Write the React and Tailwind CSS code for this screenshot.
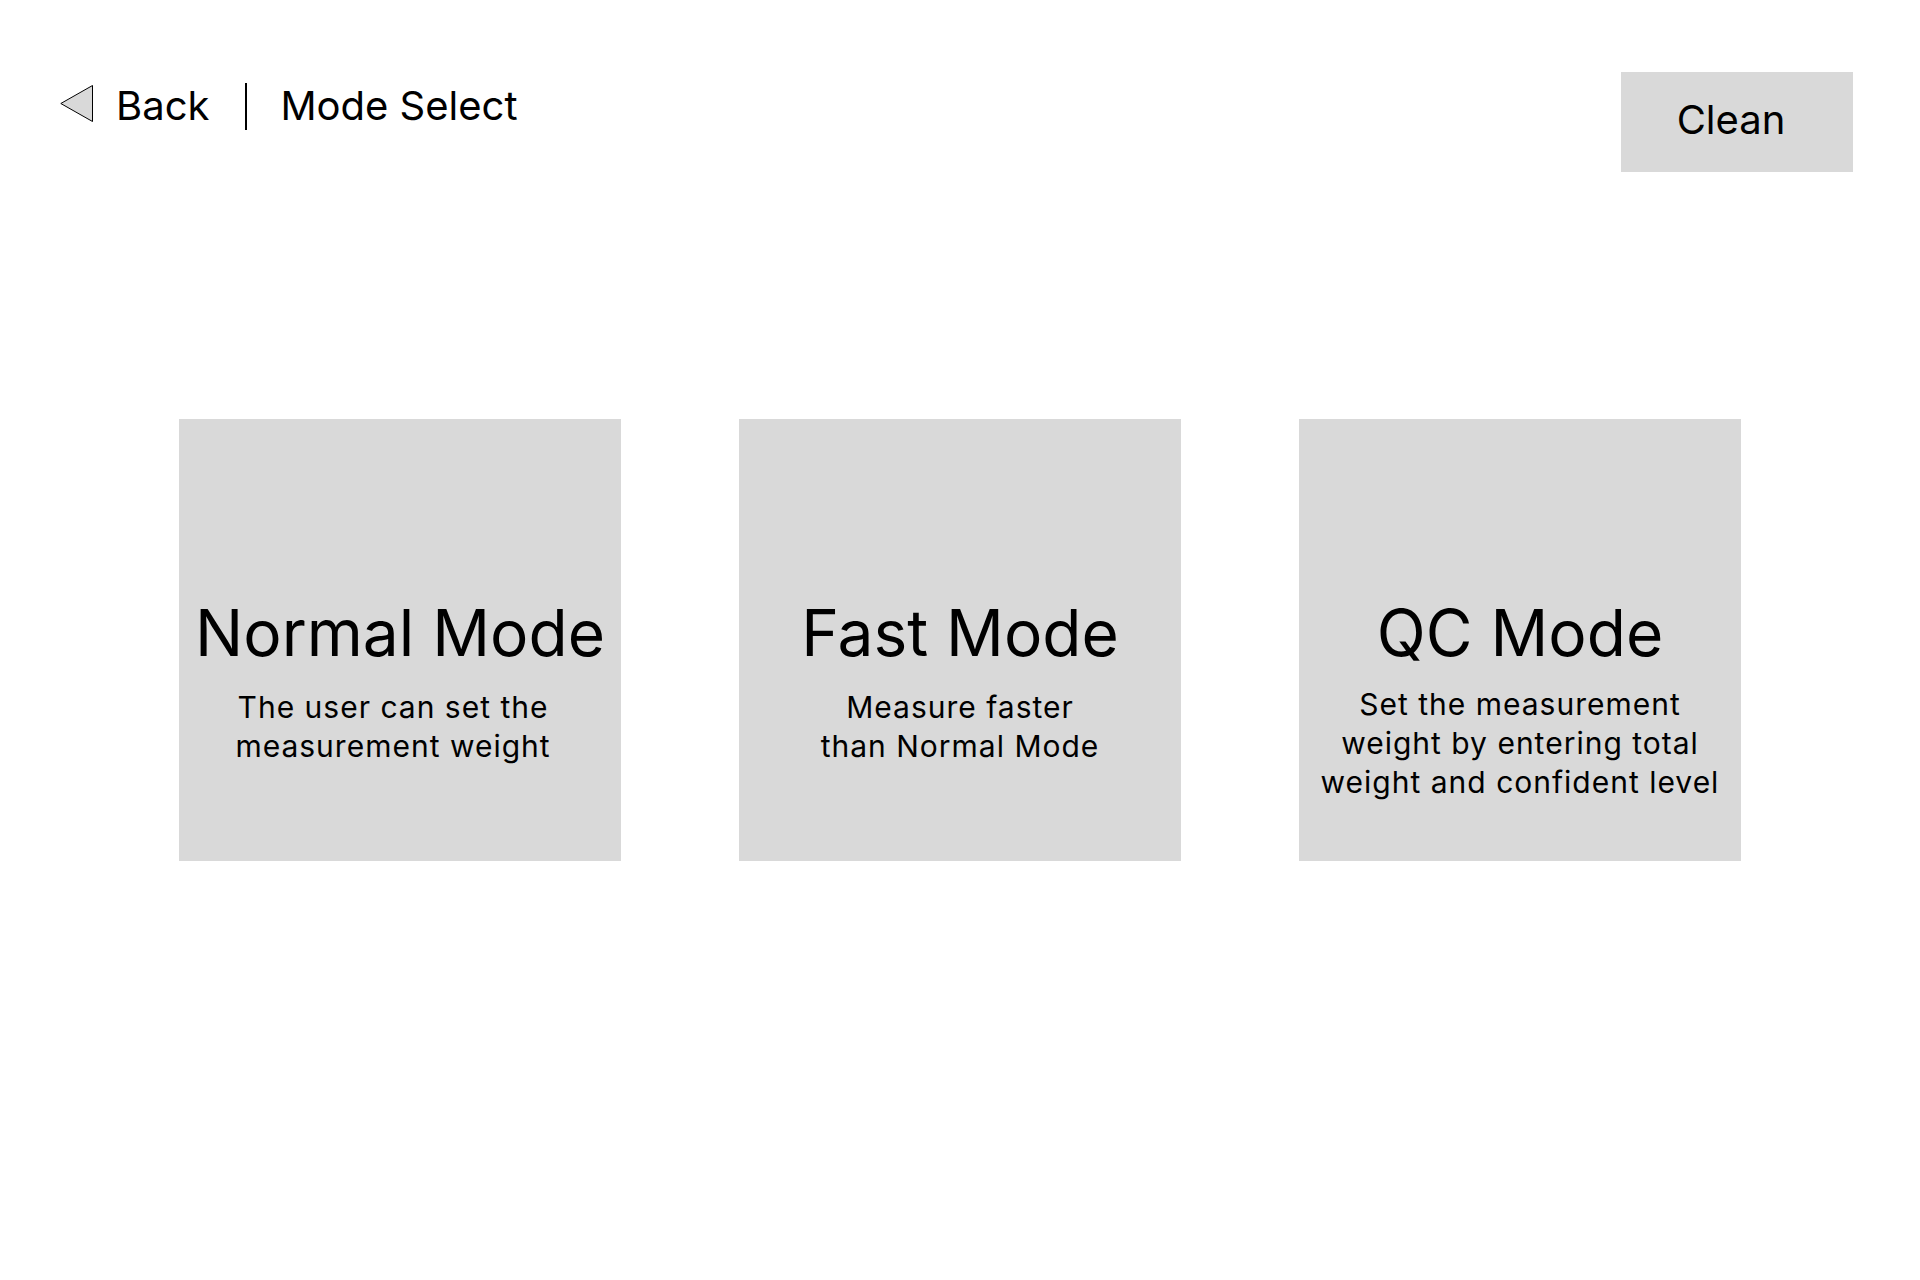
import React from 'react';

const modes = [
  {
    title: 'Normal Mode',
    lines: ['The user can set the', 'measurement weight'],
    descClass: 'mt-[17px] pr-[14px]'
  },
  {
    title: 'Fast Mode',
    lines: ['Measure faster', 'than Normal Mode'],
    descClass: 'mt-[17px]'
  },
  {
    title: 'QC Mode',
    lines: ['Set the measurement', 'weight by entering total', 'weight and confident level'],
    descClass: 'mt-[14px]'
  }
];

function BackArrow() {
  return (
    <svg width="34" height="39" viewBox="0 0 34 39" className="mt-[3px] shrink-0">
      <polygon points="32.5,0.5 0.8,18.5 32.5,36.5" fill="#d9d9d9" stroke="#000" strokeWidth="1" />
    </svg>
  );
}

function ModeCard({ mode }) {
  return (
    <div className="flex flex-col items-center w-[442px] h-[442px] bg-[#d9d9d9] pt-[175px] text-black">
      <h2 className="text-[64px] leading-[77px] font-normal">{mode.title}</h2>
      <p className={`text-[30px] leading-[39px] tracking-[1px] text-center ${mode.descClass}`}>
        {mode.lines.map((line, index) => (
          <span key={index} className="block">
            {line}
          </span>
        ))}
      </p>
    </div>
  );
}

export default function App() {
  return (
    <div
      className="w-[1920px] h-[1280px] bg-white text-black"
      style={{ fontFamily: 'Inter, "Noto Sans", sans-serif' }}>
      {/* header */}
      <div className="flex items-start justify-between pl-[60px] pr-[67px] pt-[72px]">
        <div className="flex items-start mt-[10px]">
          <BackArrow />
          <span className="ml-[22px] text-[40px] leading-[48px]">Back</span>
          <div className="ml-[36px] mt-[1px] w-[2px] h-[47px] bg-black" />
          <span className="ml-[33px] text-[40px] leading-[48px]">Mode Select</span>
        </div>
        <button className="flex items-center justify-center w-[232px] h-[100px] bg-[#d9d9d9] pr-[12px] pb-[5px] text-[40px] leading-[48px]">
          Clean
        </button>
      </div>

      {/* mode cards */}
      <div className="flex justify-center gap-[118px] mt-[247px]">
        {modes.map((mode) => (
          <ModeCard key={mode.title} mode={mode} />
        ))}
      </div>
    </div>
  );
}
